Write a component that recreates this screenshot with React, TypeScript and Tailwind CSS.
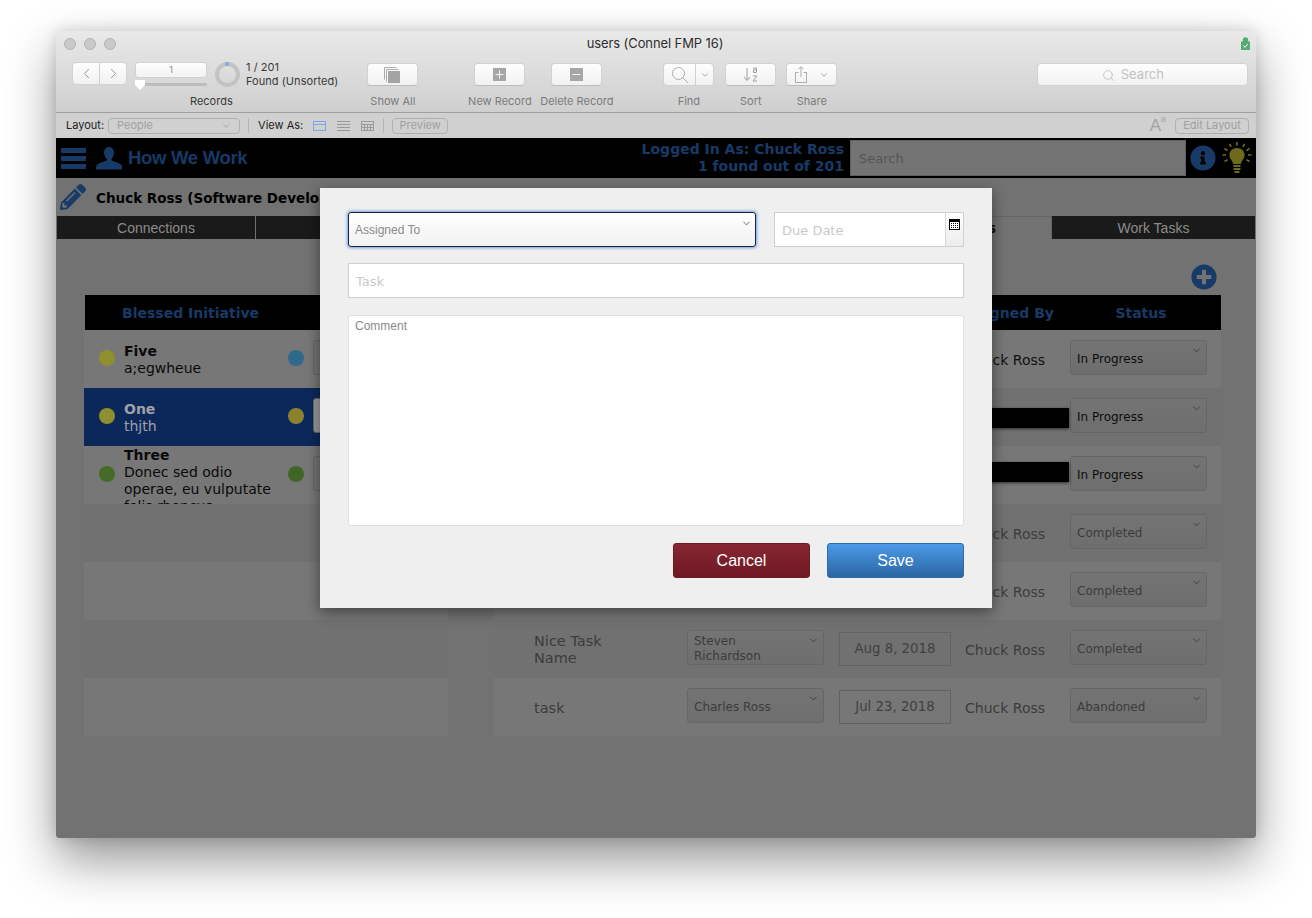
import React from "react";
import { ChevronDown, ChevronLeft, ChevronRight, Search } from "lucide-react";
import { FaInfoCircle, FaPencilAlt, FaPlusCircle } from "react-icons/fa";

const tool = { fontFamily: "Inter, 'Liberation Sans', sans-serif" };
const dv = { fontFamily: "'DejaVu Sans', Verdana, sans-serif" };
const ar = { fontFamily: "'Liberation Sans', Arial, sans-serif" };

const BLUE = "#183a66";
const ODD = "#777777";
const EVEN = "#717171";

function ToolBtn({ w = 51, children }: { w?: number; children: React.ReactNode }) {
  return (
    <div
      className="h-[23px] flex items-center justify-center rounded-[4px] bg-gradient-to-b from-[#fefefe] to-[#f1f1f1] border border-[#d2d2d2] border-b-[#bdbdbd]"
      style={{ width: w }}
    >
      {children}
    </div>
  );
}

function ToolItem({ label, ml, children }: { label: string; ml: number; children: React.ReactNode }) {
  return (
    <div className="flex flex-col items-center w-[51px] mt-[1px]" style={{ marginLeft: ml }}>
      {children}
      <div className="mt-[9px] text-[11px] leading-[13px] text-[#7b7b7b] whitespace-nowrap">{label}</div>
    </div>
  );
}

function Dot({ color }: { color: string }) {
  return <div className="w-4 h-4 mb-[2px] rounded-full shrink-0" style={{ background: color }} />;
}

function Sel({ text, dim, w = 137 }: { text: string; dim?: boolean; w?: number }) {
  return (
    <div
      className="relative h-[35px] mb-[3px] flex items-center pl-[6px] pt-[3px] pr-5 rounded-[3px] border border-[#666] bg-gradient-to-b from-[#747474] to-[#6e6e6e] text-[12px] leading-[15px] shrink-0"
      style={{ ...dv, width: w, color: dim ? "#3c3c3c" : "#0d0d0d" }}
    >
      <span>{text}</span>
      <ChevronDown className="absolute right-[4px] top-[4px]" size={11} strokeWidth={1.5} color="#2a2a2a" />
    </div>
  );
}

function LeftRow({ d1, d2, title, sub, sel, bg }: { d1?: string; d2?: string; title?: string; sub?: string; sel?: boolean; bg: string }) {
  return (
    <div className="h-[58px] flex items-center overflow-hidden relative" style={{ background: bg }}>
      {title && (
        <>
          <div className="ml-[15px] w-[25px] shrink-0"><Dot color={d1!} /></div>
          <div className="w-[164px] shrink-0 text-[14px] leading-[17px] self-start" style={{ ...dv, color: sel ? "#a0a0a8" : "#0a0a0a", paddingTop: sub && sub.length > 12 ? 1 : 13 }}>
            <div className="font-bold">{title}</div>
            <div>{sub}</div>
          </div>
          <Dot color={d2!} />
          <div className="ml-[9px] w-[40px] h-[35px] mb-[3px] rounded-[3px] border border-[#666] shrink-0" style={{ background: sel ? "#9a9a9a" : "#747474" }} />
        </>
      )}
    </div>
  );
}

type R = { name?: string; who?: string; date?: string; by?: string; status: string; dim?: boolean; bg: string; bar?: number };

function RightRow({ name, who, date, by, status, dim, bg, bar }: R) {
  return (
    <div className="h-[58px] flex items-center relative" style={{ ...dv, background: bg }}>
      <div className="ml-[40px] w-[153px] pt-[2px] text-[14.500px] leading-[17px] shrink-0" style={{ color: "#3c3c3c" }}>
        {name?.split("|").map((n) => <div key={n}>{n}</div>)}
      </div>
      <div className="shrink-0">{who ? <Sel text={who} dim={dim} /> : <div className="w-[137px]" />}</div>
      <div className="ml-[15px] w-[112px] h-[34px] mb-[1px] pt-[1px] shrink-0 flex items-center justify-center border border-[#626262] text-[13.300px] text-[#404040]">{date}</div>
      <div className="ml-[14px] w-[105px] pt-[2px] shrink-0 text-[14px] whitespace-nowrap" style={{ color: dim ? "#3c3c3c" : "#111" }}>{by}</div>
      <Sel text={status} dim={dim} />
      {bar !== undefined && (
        <div className="absolute left-[430px] w-[145px] h-5 bg-black shadow-[0_1px_3px_rgba(0,0,0,0.6)]" style={{ top: bar }} />
      )}
    </div>
  );
}

function Bulb() {
  return (
    <svg width="30" height="33" viewBox="0 0 30 33" fill="#6f691c">
      <path d="M15 6c-4.600 0-7.600 3.300-7.600 7 0 3.700 3 5.300 3.800 9h7.600c.8-3.700 3.800-5.300 3.800-9 0-3.700-3-7-7.600-7z" />
      <rect x="11.500" y="23" width="7" height="2" />
      <rect x="11.500" y="26" width="7" height="2" />
      <rect x="12.500" y="29" width="5" height="2" />
      <g stroke="#6f691c" strokeWidth="1.700" strokeLinecap="butt">
        <path d="M15 0v3.500M7.500 1.800l1.500 3M22.500 1.800l-1.500 3M2.500 6.500l3 2M27.500 6.500l-3 2M.5 13h3.500M29.500 13H26M2.500 19.500l3-1.700M27.500 19.500l-3-1.700" />
      </g>
    </svg>
  );
}

function Person() {
  return (
    <svg width="26" height="23" viewBox="0 0 26 23" fill={BLUE}>
      <path d="M13 0c3.200 0 5 2.500 5 5.500 0 2.600-1 4.800-2.300 6.200-.5.600-.4 1.600.4 2 2.800 1.300 8.900 2.300 9.900 5.300.4 1.200.3 2.800.3 3.500H0c0-.7-.1-2.300.3-3.500 1-3 7.100-4 9.900-5.300.8-.4.9-1.400.4-2C9.300 10.300 8 8.100 8 5.500 8 2.500 9.800 0 13 0z" />
    </svg>
  );
}

function CalIcon() {
  return (
    <svg width="11" height="11" viewBox="0 0 11 11">
      <rect x="0.500" y="0.500" width="10" height="10" fill="#fff" stroke="#000" />
      <rect x="0" y="0" width="11" height="3" fill="#000" />
      <g fill="#000">
        {[2, 4, 6, 8].flatMap((x) => [4, 6, 8].map((y) => <rect key={x + "-" + y} x={x} y={y} width="1" height="1" />))}
      </g>
    </svg>
  );
}

export default function App() {
  const rows: R[] = [
    { by: "Chuck Ross", status: "In Progress", bg: ODD },
    { status: "In Progress", bg: EVEN, bar: 20 },
    { status: "In Progress", bg: ODD, bar: 16 },
    { by: "Chuck Ross", status: "Completed", dim: true, bg: EVEN },
    { by: "Chuck Ross", status: "Completed", dim: true, bg: ODD },
    { name: "Nice Task|Name", who: "Steven Richardson", date: "Aug 8, 2018", by: "Chuck Ross", status: "Completed", dim: true, bg: EVEN },
    { name: "task", who: "Charles Ross", date: "Jul 23, 2018", by: "Chuck Ross", status: "Abandoned", dim: true, bg: ODD },
  ];
  return (
    <div className="w-[1312px] h-[918px] bg-white overflow-hidden pt-[31px] pl-[56px]">
      <div className="w-[1200px] h-[807px] relative flex flex-col rounded-t-[5px] rounded-b-[3px] shadow-[0_22px_50px_rgba(0,0,0,0.42),0_0_14px_rgba(0,0,0,0.15)] overflow-hidden">
        {/* toolbar */}
        <div className="h-[82px] shrink-0 bg-gradient-to-b from-[#e9e9e9] to-[#cfcfcf] border-b border-[#9f9f9f] relative" style={tool}>
          <div className="absolute left-[8px] top-[7px] flex gap-[8px]">
            {[0, 1, 2].map((i) => <div key={i} className="w-3 h-3 rounded-full bg-[#c9c9c9] border border-[#b5b5b5]" />)}
          </div>
          <div className="h-[25px] flex items-center justify-center text-[13px] tracking-[-0.1px] text-[#2e2e2e] pt-[1px] pr-[2px]">users (Connel FMP 16)</div>
          <svg className="absolute right-[6px] top-[6px]" width="9" height="13" viewBox="0 0 9 13">
            <path d="M1.800 4.500V3a2.700 2.700 0 0 1 5.400 0v1.500H9V13H0V4.500z" fill="#55ab72" />
            <path d="M2.500 8.500l1.500 1.800L6.800 7" stroke="#fff" strokeWidth="1" fill="none" />
          </svg>
          <div className="flex items-start pl-[16px] pt-[6px]">
            <div className="w-[55px] h-[23px] flex rounded-[4px] bg-gradient-to-b from-[#fefefe] to-[#f1f1f1] border border-[#d2d2d2]">
              <div className="flex-1 flex items-center justify-center border-r border-[#d0d0d0]"><ChevronLeft size={17} strokeWidth={1.300} color="#8c8c8c" /></div>
              <div className="flex-1 flex items-center justify-center"><ChevronRight size={17} strokeWidth={1.300} color="#8c8c8c" /></div>
            </div>
            <div className="ml-[8px] w-[72px] flex flex-col">
              <div className="h-[16px] rounded-[3px] bg-gradient-to-b from-[#fefefe] to-[#f3f3f3] border border-[#d2d2d2] flex items-center justify-center text-[9px] text-[#888]">1</div>
              <div className="relative mt-[5px] h-[3px] rounded bg-[#bdbdbd]">
                <div className="absolute left-0 -top-[3px] w-[10px] h-[10px] bg-white [clip-path:polygon(0_0,100%_0,100%_50%,50%_100%,0_50%)]" />
              </div>
            </div>
            <div className="ml-[8px] w-[25px] h-[25px] rounded-full border-[4px] border-[#c3c3c3] relative">
              <div className="absolute left-[6px] -top-[4px] w-[4px] h-[4px] bg-[#8caee6]" />
            </div>
            <div className="ml-[6px] -mt-[2px] text-[11px] tracking-[0.05px] leading-[14px] text-[#3a3a3a] whitespace-nowrap">
              <div>1 / 201</div>
              <div>Found (Unsorted)</div>
            </div>
            <ToolItem label="Show All" ml={29}>
              <ToolBtn>
                <svg width="17" height="16" viewBox="0 0 17 16">
                  <path d="M.5.500h12M.5.500v12M2.500 2.500h12M2.500 2.500v12" stroke="#aaa" strokeWidth="1" fill="none" />
                  <rect x="4" y="4" width="12" height="12" fill="#a4a4a4" />
                </svg>
              </ToolBtn>
            </ToolItem>
            <ToolItem label="New Record" ml={56}>
              <ToolBtn>
                <svg width="13" height="13" viewBox="0 0 13 13"><rect width="13" height="13" fill="#a6a6a6" /><path d="M6.500 2.500v8M2.500 6.500h8" stroke="#f4f4f4" strokeWidth="1" /></svg>
              </ToolBtn>
            </ToolItem>
            <ToolItem label="Delete Record" ml={26}>
              <ToolBtn>
                <svg width="13" height="13" viewBox="0 0 13 13"><rect width="13" height="13" fill="#a6a6a6" /><path d="M2.500 6.500h8" stroke="#f4f4f4" strokeWidth="1" /></svg>
              </ToolBtn>
            </ToolItem>
            <ToolItem label="Find" ml={61}>
              <div className="w-[51px] h-[23px] flex rounded-[4px] bg-gradient-to-b from-[#fefefe] to-[#f1f1f1] border border-[#d2d2d2]">
                <div className="w-[32px] flex items-center justify-center border-r border-[#d0d0d0]">
                  <svg width="18" height="18" viewBox="0 0 18 18" fill="none" stroke="#adadad" strokeWidth="1"><circle cx="7.500" cy="7.500" r="6" /><path d="M12 12l5 5" /></svg>
                </div>
                <div className="flex-1 flex items-center justify-center"><ChevronDown size={10} strokeWidth={2} color="#9a9a9a" /></div>
              </div>
            </ToolItem>
            <ToolItem label="Sort" ml={11}>
              <ToolBtn>
                <svg width="16" height="15" viewBox="0 0 16 15" fill="none" stroke="#9e9e9e" strokeWidth="1"><path d="M4 1v12M1 10l3 3.500L7 10" /><path d="M10 1.200h3.500v4M13.500 3h-3v2.500h3M10 9h4l-4 5h4" /></svg>
              </ToolBtn>
            </ToolItem>
            <ToolItem label="Share" ml={10}>
              <ToolBtn>
                <div className="flex items-center gap-[12px]">
                  <svg width="12" height="17" viewBox="0 0 12 17" fill="none" stroke="#adadad" strokeWidth="1"><path d="M3.500 6.500H.5v10h11v-10h-3M6 11V1M3.500 3.200L6 .7l2.500 2.500" /></svg>
                  <ChevronDown size={10} strokeWidth={2} color="#9a9a9a" />
                </div>
              </ToolBtn>
            </ToolItem>
            <div className="ml-[200px] mt-[1px] w-[211px] h-[23px] rounded-[4px] bg-gradient-to-b from-[#fefefe] to-[#f1f1f1] border border-[#d2d2d2] flex items-center justify-center gap-[6px] pr-[20px] pt-[1px] text-[13px] text-[#c2c2c2]">
              <Search size={13} strokeWidth={1.300} color="#b5b5b5" />
              <span>Search</span>
            </div>
          </div>
          <div className="absolute left-[134px] top-[64px] text-[11px] leading-[13px] text-[#3a3a3a]">Records</div>
        </div>
        {/* layout bar */}
        <div className="h-[25px] shrink-0 bg-[#d0d0d0] flex items-center pl-[10px] pr-[7px] text-[11px] text-[#222]" style={tool}>
          <span>Layout:</span>
          <div className="ml-[4px] w-[132px] h-[16px] rounded-[4px] border border-[#b0b0b0] flex items-center justify-between px-[8px] text-[#a0a0a0]">
            <span>People</span>
            <ChevronDown size={10} strokeWidth={1.500} color="#909090" />
          </div>
          <div className="ml-[8px] w-px h-[15px] bg-[#b5b5b5]" />
          <span className="ml-[9px]">View As:</span>
          <svg className="ml-[10px]" width="13" height="10" viewBox="0 0 13 10" fill="none" stroke="#7ea6e0"><rect x=".5" y=".5" width="12" height="9" /><path d="M.5 3.500h12" /></svg>
          <svg className="ml-[11px]" width="13" height="10" viewBox="0 0 13 10" stroke="#9a9a9a"><path d="M0 .5h13M0 3.500h13M0 6.500h13M0 9.500h13" /></svg>
          <svg className="ml-[11px]" width="13" height="10" viewBox="0 0 13 10" fill="none" stroke="#9a9a9a"><rect x=".5" y=".5" width="12" height="9" /><path d="M.5 3.500h12M.5 6.500h12M3.500 3v7M6.500 3v7M9.500 3v7" /></svg>
          <div className="ml-[9px] w-px h-[15px] bg-[#b5b5b5]" />
          <div className="ml-[8px] w-[56px] h-[16px] rounded-[4px] border border-[#b0b0b0] flex items-center justify-center text-[#a0a0a0]">Preview</div>
          <div className="ml-auto text-[17px] text-[#a4a4a4] leading-none relative pr-[5px]" style={ar}>A<span className="absolute top-[-2px] right-0 text-[9px]">a</span></div>
          <div className="ml-[9px] w-[74px] h-[16px] rounded-[4px] border border-[#b0b0b0] flex items-center justify-center text-[#a0a0a0]">Edit Layout</div>
        </div>
        {/* content */}
        <div className="flex-1 flex flex-col bg-[#727272]">
          <div className="h-[40px] bg-black flex items-center shrink-0">
            <div className="ml-[5px] flex flex-col gap-[3px]">
              {[0, 1, 2].map((i) => <div key={i} className="w-[25px] h-[5px]" style={{ background: BLUE }} />)}
            </div>
            <div className="ml-[10px]"><Person /></div>
            <div className="ml-[6px] text-[18.500px] font-bold tracking-[-0.3px]" style={{ ...ar, color: BLUE }}>How We Work</div>
            <div className="ml-auto text-right text-[14px] leading-[17px] font-bold" style={{ ...dv, color: BLUE }}>
              <div>Logged In As: Chuck Ross</div>
              <div>1 found out of 201</div>
            </div>
            <div className="ml-[6px] w-[336px] h-[36px] bg-[#747474] border border-[#606060] flex items-center pl-[8px] pt-[1px] text-[13px] text-[#555]" style={dv}>Search</div>
            <FaInfoCircle className="ml-[4px]" size={26} color={BLUE} />
            <div className="ml-[6px] mr-[4px]"><Bulb /></div>
          </div>
          <div className="h-[38px] flex items-center shrink-0 pl-[4px]">
            <FaPencilAlt size={26} color={BLUE} />
            <span className="ml-[10px] pt-[2px] text-[13.500px] font-bold text-black whitespace-nowrap" style={dv}>Chuck Ross (Software Developer)</span>
          </div>
          <div className="h-[23px] flex ml-px mr-px shrink-0 text-[14px]" style={ar}>
            {["Connections", "", "", ""].map((t, i) => (
              <div key={i} className={"flex items-center justify-center pt-[1px] text-[#8c8c8c] bg-[#1a1a1a] border-r border-[#727272] " + (i === 0 ? "w-[199px]" : "w-[198px]")}>{t}</div>
            ))}
            <div className="w-[202px] flex items-center justify-end pr-[55px] pt-[1px] text-[#111] font-bold bg-[#727272] border-t border-r border-[#666]" style={dv}>Tasks</div>
            <div className="flex-1 flex items-center justify-center pt-[1px] text-[#8c8c8c] bg-[#1a1a1a]">Work Tasks</div>
          </div>
          <div className="h-[56px] shrink-0 flex justify-end items-end pr-[39px] pb-[5px]">
            <FaPlusCircle size={26} color={BLUE} />
          </div>
          <div className="ml-[29px] w-[1136px] h-[35px] pt-[2px] bg-black shrink-0 flex items-center text-[14px] font-bold" style={{ ...dv, color: BLUE }}>
            <div className="ml-[37px] w-[750px]">Blessed Initiative</div>
            <div className="w-[182px] text-right">Assigned By</div>
            <div className="ml-[52px] w-[70px] text-center">Status</div>
          </div>
          <div className="flex ml-[28px]">
            <div className="w-[364px] flex flex-col shrink-0">
              <LeftRow title="Five" sub="a;egwheue" d1="#8f8f30" d2="#2f6a8c" bg={ODD} />
              <LeftRow title="One" sub="thjth" d1="#8f8f30" d2="#8a822c" bg="#0c285a" sel />
              <LeftRow title="Three" sub="Donec sed odio operae, eu vulputate felis rhoncus" d1="#466a27" d2="#406626" bg={ODD} />
              <LeftRow bg={EVEN} />
              <LeftRow bg={ODD} />
              <LeftRow bg={EVEN} />
              <LeftRow bg={ODD} />
            </div>
            <div className="ml-[46px] w-[727px] flex flex-col shrink-0">
              {rows.map((r, i) => <RightRow key={i} {...r} />)}
            </div>
          </div>
        </div>
        {/* modal */}
        <div className="absolute left-[264px] top-[157px] w-[672px] h-[420px] bg-[#efefef] shadow-[0_4px_14px_rgba(0,0,0,0.45)] px-[28px] pt-[24px]">
          <div className="flex gap-[18px]">
            <div className="relative w-[408px] h-[35px] rounded-[3px] border-[1.500px] border-[#1c2433] shadow-[0_0_3px_1px_rgba(80,140,230,0.8)] bg-gradient-to-b from-white to-[#f1f1f1] flex items-center pl-[6px] text-[12px] text-[#8a8a8a]" style={ar}>
              Assigned To
              <ChevronDown className="absolute right-[3px] top-[5px]" size={11} strokeWidth={1.500} color="#333" />
            </div>
            <div className="w-[190px] h-[35px] flex border border-[#cfcfcf] bg-white">
              <div className="flex-1 flex items-center pl-[7px] pt-[2px] text-[13px] text-[#c9c9c9]" style={dv}>Due Date</div>
              <div className="w-[18px] border-l border-[#d8d8d8] bg-gradient-to-b from-white to-[#ececec] flex justify-center pt-[6px]"><CalIcon /></div>
            </div>
          </div>
          <div className="mt-[16px] h-[35px] border border-[#cfcfcf] bg-white flex items-center pl-[7px] pt-[2px] text-[13px] text-[#c9c9c9]" style={dv}>Task</div>
          <div className="mt-[17px] h-[211px] rounded-[3px] border border-[#dedede] bg-white pl-[6px] pt-[1px] text-[12px] text-[#8a8a8a]" style={ar}>Comment</div>
          <div className="mt-[17px] flex justify-end gap-[17px] text-[16px] text-white" style={ar}>
            <div className="w-[137px] h-[35px] rounded-[3px] flex items-center justify-center border border-[#6d1a24] bg-gradient-to-b from-[#872733] to-[#6f1823]">Cancel</div>
            <div className="w-[137px] h-[35px] rounded-[3px] flex items-center justify-center border border-[#2f6ba8] bg-gradient-to-b from-[#4c9ae8] to-[#2a66a3]">Save</div>
          </div>
        </div>
      </div>
    </div>
  );
}
